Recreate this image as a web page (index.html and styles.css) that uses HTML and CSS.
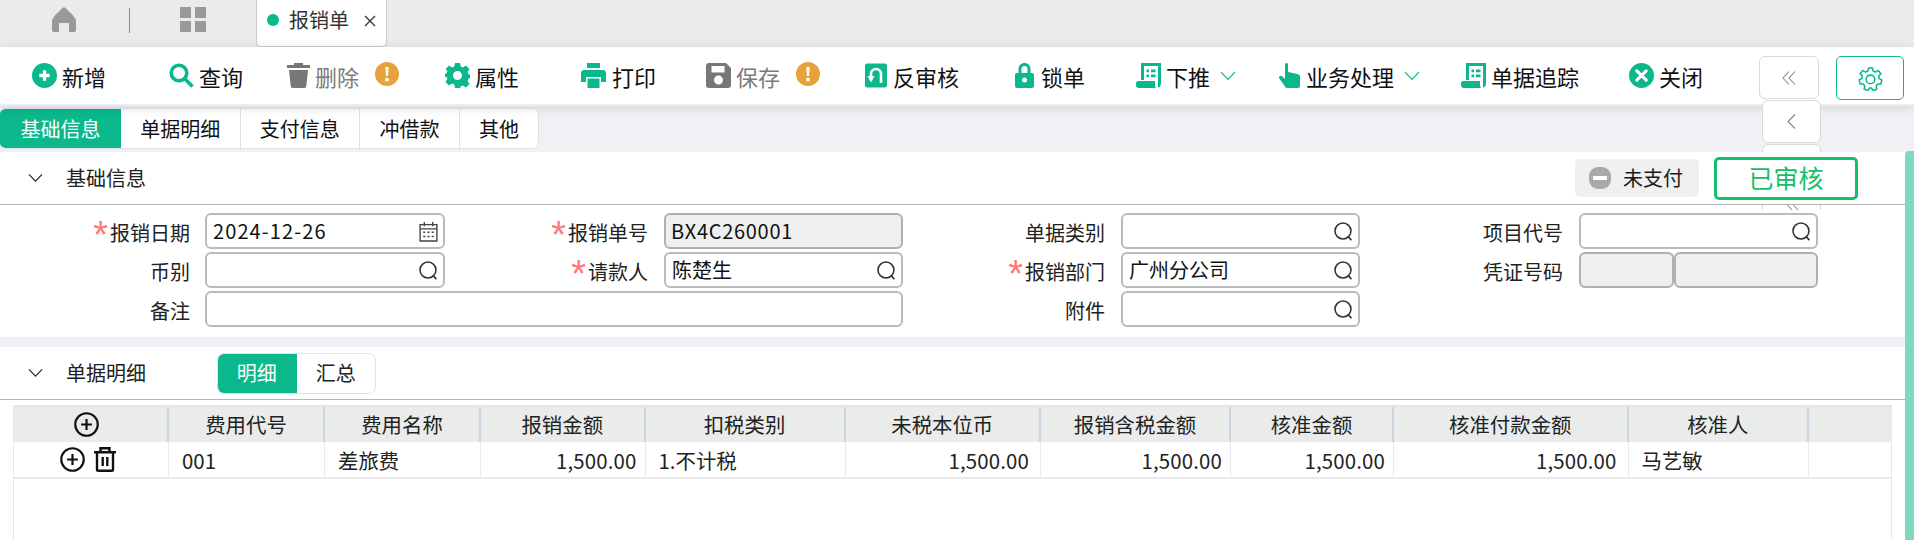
FILE: index.html
```html
<!DOCTYPE html>
<html lang="zh-CN">
<head>
<meta charset="utf-8">
<title>报销单</title>
<link rel="stylesheet" href="styles.css">
</head>
<body>
<svg class="defs" width="0" height="0" aria-hidden="true">
  <defs>
    <symbol id="search" viewBox="0 0 20 20"><circle cx="9.5" cy="9.5" r="7.6" fill="none" stroke="currentColor" stroke-width="1.5"/><path d="M14.5 15l2.6 2.8" fill="none" stroke="currentColor" stroke-width="1.6" stroke-linecap="round"/></symbol>
    <symbol id="chev" viewBox="0 0 16 10"><path d="M1 1.2l7 7.2 7-7.2" fill="none" stroke="currentColor" stroke-width="1.2"/></symbol>
    <symbol id="warn" viewBox="0 0 24 24"><circle cx="12" cy="12" r="12" fill="#e8a23c"/><path d="M10.4 5h3.2l-.6 9h-2zM10.3 16h3.4v3.2h-3.4z" fill="#fff"/></symbol>
    <symbol id="doc" viewBox="0 0 25 25"><path d="M5 0h20v20c0 2.500-1 4.500-3 4.500V3H8v14H5z" fill="currentColor"/><path d="M1.500 18H19v3.500c0 2 .6 3 1 3.500H3c-1.800 0-3-1-3-3v-2c0-.8.700-1.500 1.500-1.500z" fill="currentColor"/><path d="M10.500 6.500h2.500v2.800h-2.500zM15 6.500h4.500v2.800H15zM10.500 11.500h2.500v2.800h-2.500zM15 11.500h4.500v2.800H15z" fill="currentColor"/></symbol>
    <symbol id="plus" viewBox="0 0 24 24"><circle cx="12" cy="12" r="10.8" fill="none" stroke="currentColor" stroke-width="2.100"/><path d="M12 6.800v10.400M6.800 12h10.400" fill="none" stroke="currentColor" stroke-width="2.100"/></symbol>
    <symbol id="dbl-left" viewBox="0 0 14 14"><path d="M7 .5L1 7l6 6.500M13 .5L7 7l6 6.500" fill="none" stroke="currentColor" stroke-width="1.100"/></symbol>
    <symbol id="sgl-left" viewBox="0 0 9 15"><path d="M8 .5L1 7.500l7 7" fill="none" stroke="currentColor" stroke-width="1.200"/></symbol>
    <symbol id="dbl-right" viewBox="0 0 14 14"><path d="M1 .5L7 7l-6 6.500M7 .5L13 7l-6 6.500" fill="none" stroke="currentColor" stroke-width="1.100"/></symbol>
  </defs>
</svg>

<nav class="tabbar">
  <svg class="nav-home" viewBox="0 0 24 25"><path d="M12 0c2 1.500 9 7.500 10 10 1 1.500 2 2.500 2 4v9c0 1-.6 2-2 2h-5v-9H7v9H2c-1.400 0-2-1-2-2v-9c0-1.500 1-2.500 2-4 1-2.500 8-8.500 10-10z" fill="#999"/></svg>
  <span class="nav-sep"></span>
  <svg class="nav-grid" viewBox="0 0 26 25"><path d="M0 0h11v11H0zM15 0h11v11H15zM0 14h11v11H0zM15 14h11v11H15z" fill="#999"/></svg>
  <div class="doc-tab">
    <span class="doc-dot"></span>
    <span class="doc-name">报销单</span>
    <svg class="doc-x" viewBox="0 0 12 12"><path d="M1 1l10 10M11 1L1 11" stroke="#333" stroke-width="1.300"/></svg>
  </div>
</nav>

<header class="toolbar">
  <div class="tool"><svg class="ic" viewBox="0 0 24 24"><circle cx="12" cy="12" r="12" fill="#0ab88c"/><path d="M10.400 7h3.200v3.400H17v3.200h-3.400V17h-3.200v-3.400H7v-3.200h3.400z" fill="#fff"/></svg><span>新增</span></div>
  <div class="tool"><svg class="ic" viewBox="0 0 25 25"><circle cx="10" cy="10" r="7.800" fill="none" stroke="#0ab88c" stroke-width="3.600"/><path d="M15.500 15.500l8 8" stroke="#0ab88c" stroke-width="3.800"/></svg><span>查询</span></div>
  <div class="tool off"><svg class="ic" viewBox="0 0 25 25"><path d="M8 0h9v2h7v3H1V2h7zM3 7h19l-1.700 16c-.1 1-.8 2-2 2H6.700c-1.200 0-1.900-1-2-2z" fill="#777"/></svg><span class="tight">删除</span><svg class="ic-warn"><use href="#warn"/></svg></div>
  <div class="tool"><svg class="ic" viewBox="0 0 25 25"><path fill-rule="evenodd" d="M10 0h5l.7 3.400 2.300 1 3-1.900 3.500 3.500-1.900 3 1 2.300 1.400.7v3l-1.400.7-1 2.300 1.900 3-3.500 3.500-3-1.900-2.300 1L15 25h-5l-.7-3.400-2.300-1-3 1.900L.5 19l1.900-3-1-2.300L0 14v-3l1.400-.7 1-2.300L.5 6 4 2.500l3 1.900 2.300-1zM12.500 8a4.500 4.500 0 1 0 0 9 4.500 4.500 0 0 0 0-9z" fill="#0ab88c"/></svg><span>属性</span></div>
  <div class="tool"><svg class="ic" viewBox="0 0 25 25"><path fill-rule="evenodd" d="M6 0h13v5H6zM3 7h19c1.700 0 3 1.300 3 3v9h-5v-5H5v5H0v-9c0-1.700 1.300-3 3-3zM6.500 15.500h12V25h-12z" fill="#0ab88c"/></svg><span class="wide-gap">打印</span></div>
  <div class="tool off"><svg class="ic" viewBox="0 0 25 25"><path fill-rule="evenodd" d="M3 0h17l5 5v17c0 1.700-1.300 3-3 3H3c-1.700 0-3-1.300-3-3V3c0-1.700 1.300-3 3-3zM5.500 3v6.500h13V3zM12.500 12.500a4.500 4.500 0 1 0 0 9 4.500 4.500 0 0 0 0-9z" fill="#777"/></svg><span>保存</span><svg class="ic-warn"><use href="#warn"/></svg></div>
  <div class="tool"><svg class="ic-w22" viewBox="0 0 22 24"><rect width="22" height="24" rx="2.500" fill="#0ab88c"/><path d="M16 19.500V10.500a5 5 0 0 0-10 0V13" fill="none" stroke="#fff" stroke-width="2.600"/><path d="M2.500 12.500h7L6 19z" fill="#fff"/></svg><span>反审核</span></div>
  <div class="tool"><svg class="ic-w19" viewBox="0 0 19 25"><path fill-rule="evenodd" d="M9.500 0C13 0 15.500 2.600 15.500 6v4H17c1.100 0 2 .9 2 2v11c0 1.100-.9 2-2 2H2c-1.100 0-2-.9-2-2V12c0-1.100.9-2 2-2h1.500V6C3.500 2.600 6 0 9.500 0zm0 3C7.700 3 6.500 4.300 6.500 6v4h6V6c0-1.700-1.200-3-3-3zm0 11.500a2.500 2.500 0 1 0 0 5 2.500 2.500 0 0 0 0-5z" fill="#0ab88c"/></svg><span>锁单</span></div>
  <div class="tool"><svg class="ic doc"><use href="#doc"/></svg><span>下推</span><svg class="ic-chev"><use href="#chev"/></svg></div>
  <div class="tool"><svg class="ic-w21" viewBox="0 0 21 25"><path d="M6 1.500C6 .6 6.700 0 7.500 0S9 .6 9 1.500V9l9.500 2c1.500.3 2.500 1.500 2.500 3v9c0 1.100-.9 2-2 2H8c-.7 0-1.300-.3-1.700-.9L.3 15.500c-.6-.9-.3-2 .6-2.500.7-.4 1.600-.3 2.200.3L6 16z" fill="#0ab88c"/></svg><span>业务处理</span><svg class="ic-chev"><use href="#chev"/></svg></div>
  <div class="tool"><svg class="ic doc"><use href="#doc"/></svg><span>单据追踪</span></div>
  <div class="tool"><svg class="ic" viewBox="0 0 24 24"><circle cx="12" cy="12" r="12" fill="#0ab88c"/><path d="M7.500 7.500l9 9M16.500 7.500l-9 9" stroke="#fff" stroke-width="3" stroke-linecap="round"/></svg><span>关闭</span></div>
</header>

<div class="pager">
  <button class="pg pg-first" type="button" aria-label="首页"><svg class="pg-dbl"><use href="#dbl-left"/></svg></button>
  <button class="pg" type="button" aria-label="上一页"><svg class="pg-sgl"><use href="#sgl-left"/></svg></button>
  <button class="pg" type="button" aria-label="下一页"></button>
  <button class="pg" type="button" aria-label="末页"><svg class="pg-dbl"><use href="#dbl-right"/></svg></button>
</div>
<button class="gear" type="button" aria-label="设置">
  <svg viewBox="0 0 26 26"><path d="M11 2h4l.7 3.200 2.500 1.100 2.900-1.700 2.700 3.400-2.200 2.400.4 2.700 2.800 1.500-1 4.100-3.200.1-1.700 2.100.7 3.200-3.800 1.600L14 22.900h-2l-1.800 2.700-3.800-1.600.7-3.200-1.700-2.100-3.200-.1-1-4.100 2.800-1.500.4-2.700L2.200 8l2.700-3.400 2.900 1.700 2.500-1.100z" fill="none" stroke="#0ab88c" stroke-width="1.600" stroke-linejoin="round"/><circle cx="13" cy="14" r="4.500" fill="none" stroke="#0ab88c" stroke-width="1.600"/></svg>
</button>

<div class="subtabs">
  <span class="subtab on">基础信息</span>
  <span class="subtab">单据明细</span>
  <span class="subtab">支付信息</span>
  <span class="subtab">冲借款</span>
  <span class="subtab">其他</span>
</div>

<main class="content">
  <section class="panel panel-basic">
    <div class="panel-head">
      <svg class="head-chev"><use href="#chev"/></svg>
      <span class="head-title">基础信息</span>
      <div class="chip"><span class="chip-ic"></span><span>未支付</span></div>
      <div class="stamp">已审核</div>
    </div>
    <div class="form">
      <label class="lbl"><i>*</i>报销日期</label>
      <div class="fld date"><span>2024-12-26</span><svg class="fic" viewBox="0 0 18 20"><path d="M1 3.500h16V19H1z M1 7.500h16 M5 1v4 M13 1v4" fill="none" stroke="#444" stroke-width="1.300"/><path d="M4 10h2v1.500H4zM8 10h2v1.500H8zM12 10h2v1.500h-2zM4 14h2v1.500H4zM8 14h2v1.500H8zM12 14h2v1.500h-2z" fill="#444"/></svg></div>
      <label class="lbl"><i>*</i>报销单号</label>
      <div class="fld dis code"><span>BX4C260001</span></div>
      <label class="lbl">单据类别</label>
      <div class="fld"><svg class="fic"><use href="#search"/></svg></div>
      <label class="lbl">项目代号</label>
      <div class="fld"><svg class="fic"><use href="#search"/></svg></div>

      <label class="lbl">币别</label>
      <div class="fld"><svg class="fic"><use href="#search"/></svg></div>
      <label class="lbl"><i>*</i>请款人</label>
      <div class="fld"><span>陈楚生</span><svg class="fic"><use href="#search"/></svg></div>
      <label class="lbl"><i>*</i>报销部门</label>
      <div class="fld"><span>广州分公司</span><svg class="fic"><use href="#search"/></svg></div>
      <label class="lbl">凭证号码</label>
      <div class="pair"><div class="fld dis"></div><div class="fld dis"></div></div>

      <label class="lbl">备注</label>
      <div class="fld wide"></div>
      <label class="lbl">附件</label>
      <div class="fld"><svg class="fic"><use href="#search"/></svg></div>
    </div>
  </section>

  <section class="panel panel-detail">
    <div class="panel-head">
      <svg class="head-chev"><use href="#chev"/></svg>
      <span class="head-title">单据明细</span>
      <div class="toggle"><span class="tg on">明细</span><span class="tg">汇总</span></div>
    </div>
    <div class="grid-wrap">
      <div class="row row-h">
        <div class="c c-act"><svg class="ic-plus"><use href="#plus"/></svg></div>
        <div class="c">费用代号</div><div class="c">费用名称</div><div class="c">报销金额</div><div class="c">扣税类别</div><div class="c">未税本位币</div><div class="c">报销含税金额</div><div class="c">核准金额</div><div class="c">核准付款金额</div><div class="c">核准人</div><div class="c"></div>
      </div>
      <div class="row row-b">
        <div class="c c-act"><svg class="ic-plus"><use href="#plus"/></svg><svg class="ic-trash" viewBox="0 0 24 25"><path d="M1 5.200h22M7.500 5V1.300h9V5M4 5v17.500c0 .8.500 1.300 1.300 1.300h13.400c.8 0 1.300-.5 1.300-1.300V5M9.700 10v9M14.300 10v9" fill="none" stroke="#111" stroke-width="2.400"/></svg></div>
        <div class="c">001</div><div class="c">差旅费</div><div class="c num">1,500.00</div><div class="c">1.不计税</div><div class="c num n11">1,500.00</div><div class="c num">1,500.00</div><div class="c num">1,500.00</div><div class="c num n11">1,500.00</div><div class="c">马艺敏</div><div class="c"></div>
      </div>
    </div>
  </section>
</main>
<div class="thumb"></div>
</body>
</html>
```

FILE: styles.css
```css
* { box-sizing: border-box; }
html, body { margin: 0; padding: 0; height: 540px; overflow: hidden; }
body {
  position: relative;
  background: #f0f1f5;
  color: #1a1a1a;
  font: 20px/1.2 "Noto Sans CJK SC", "Noto Sans", sans-serif;
}
.defs { position: absolute; }

.tabbar {
  height: 47px;
  display: flex;
  align-items: flex-start;
  background: #e9eceb;
}
.nav-home { width: 24px; height: 25px; margin: 7px 0 0 52px; }
.nav-sep { width: 1px; height: 25px; margin: 8px 0 0 53px; background: #8a8a8a; }
.nav-grid { width: 26px; height: 25px; margin: 7px 0 0 50px; }
.doc-tab {
  width: 131px;
  height: 47px;
  margin-left: 50px;
  display: flex;
  align-items: flex-start;
  background: #fff;
  border: 1px solid #c9cbcc;
  border-top: 0;
  border-radius: 0 0 5px 5px;
}
.doc-dot { width: 12px; height: 12px; margin: 14px 0 0 10px; border-radius: 50%; background: #0ab88c; }
.doc-name { margin: 8px 0 0 10px; line-height: 24px; color: #333; }
.doc-x { width: 12px; height: 12px; margin: 15px 0 0 15px; }

.toolbar {
  position: relative;
  z-index: 2;
  height: 59px;
  padding-left: 32px;
  display: grid;
  grid-template-columns: 137px 117px 159px 136px 125px 159px 150px 121px 143px 182px 168px 130px;
  align-items: center;
  background: #fff;
  border-bottom: 2px solid #eeeeef;
  box-shadow: 0 2px 10px rgba(0, 0, 0, .12);
  font-size: 22px;
}
.tool { display: flex; align-items: center; color: #111; height: 28px; }
.tool > span { margin-left: 5px; line-height: 28px; }
.tool > .tight { margin-left: 4px; }
.tool > .wide-gap { margin-left: 6px; }
.tool.off > span { color: #7b7b7b; }
.ic { width: 25px; height: 25px; flex: none; }
.ic-w22 { width: 22px; height: 25px; flex: none; margin-right: 1px; }
.ic-w19 { width: 19px; height: 25px; flex: none; margin-right: 2px; }
.ic-w21 { width: 21px; height: 25px; flex: none; margin-right: 1px; }
.doc { color: #0ab88c; }
.ic-warn { width: 24px; height: 24px; margin: -4px 0 0 16px; flex: none; }
.ic-chev { width: 16px; height: 10px; margin-left: 10px; color: #0ab88c; flex: none; }

.pager {
  position: absolute;
  z-index: 3;
  top: 56px;
  left: 1759px;
  width: 62px;
  display: flex;
  flex-direction: column;
  align-items: flex-end;
  gap: 1px;
}
.pg {
  width: 59px;
  height: 43px;
  padding: 0;
  display: flex;
  align-items: center;
  justify-content: center;
  background: #fff;
  border: 1px solid #d9d9d9;
  border-radius: 6px;
  color: #8a8a8a;
}
.pg-first { width: 60px; margin-right: 2px; }
.pg-dbl { width: 14px; height: 14px; }
.pg-sgl { width: 9px; height: 15px; }
.gear {
  position: absolute;
  z-index: 3;
  top: 56px;
  left: 1836px;
  width: 68px;
  height: 44px;
  padding: 0;
  background: #fff;
  border: 1px solid #0ab88c;
  border-radius: 5px;
  display: flex;
  align-items: center;
  justify-content: center;
}
.gear svg { width: 25px; height: 25px; }

.subtabs {
  width: 539px;
  height: 41px;
  margin-top: 2px;
  display: flex;
  background: #fff;
  border: 1px solid #e0e1ea;
  border-left: 0;
  border-radius: 6px;
  overflow: hidden;
}
.subtab {
  display: flex;
  align-items: center;
  justify-content: center;
  width: 119.500px;
  color: #111;
  border-right: 1px solid #dfe1ea;
}
.subtab:nth-child(4) { width: 100px; }
.subtab:last-child { width: 78px; border-right: 0; }
.subtab.on { width: 121px; margin: -1px 0; background: #0ab88c; color: #fff; border-right: 0; }

.content { margin-top: 3px; width: 1905px; }
.panel { background: #fff; }
.panel-basic { height: 185px; }
.panel-detail { height: 193px; margin-top: 10px; }
.panel-head {
  position: relative;
  z-index: 4;
  height: 53px;
  display: flex;
  align-items: center;
  background: #fff;
  border-bottom: 1px solid #b4b4b4;
}
.head-chev { width: 15px; height: 10px; margin-left: 28px; color: #222; flex: none; }
.head-title { margin-left: 23px; color: #222; }
.chip {
  margin: 0 0 0 auto;
  width: 124px;
  height: 38px;
  display: flex;
  align-items: center;
  background: #f0f0f0;
  border-radius: 5px;
}
.chip-ic {
  position: relative;
  width: 22px;
  height: 22px;
  margin: 0 12px 0 14px;
  border-radius: 9px;
  background: #a9a9a9;
}
.chip-ic::after {
  content: "";
  position: absolute;
  left: 4px;
  right: 4px;
  top: 9px;
  height: 4px;
  background: #fff;
}
.stamp {
  width: 144px;
  height: 43px;
  margin: 0 47px 0 15px;
  border: 3px solid #12c06c;
  border-radius: 5px;
  color: #17bf69;
  font-size: 25px;
  line-height: 35px;
  text-align: center;
}

.form {
  position: relative;
  z-index: 4;
  margin-top: 5px;
  padding-top: 3px;
  display: grid;
  grid-template-columns: 205px 240px 219px 239px 218px 239px 219px 239px;
  grid-auto-rows: 36px;
  row-gap: 3px;
  background: #fff;
}
.lbl {
  padding: 3px 16px 0 0;
  text-align: right;
  line-height: 34px;
  color: #222;
}
.lbl:first-child, .lbl:nth-child(9), .lbl:nth-child(17) { padding-right: 15px; }
.lbl i {
  color: #f77;
  font: 38px/0 "Liberation Sans", sans-serif;
  margin-right: 2px;
  vertical-align: -7px;
}
.fld {
  height: 36px;
  padding: 0 4px 0 6px;
  display: flex;
  align-items: center;
  justify-content: space-between;
  background: #fff;
  border: 2px solid #bbb;
  border-radius: 6px;
  line-height: 30px;
  color: #111;
}
.fld > span { margin-top: -1px; }
.fld.dis { background: #eeefef; border-color: #b0b0b0; }
.date > span { letter-spacing: 1.100px; }
.code > span { letter-spacing: .7px; margin-left: -1px; }
.fic { width: 21px; height: 21px; margin-left: auto; color: #333; flex: none; }
.fld.wide { grid-column: span 3; }
.pair { display: grid; grid-template-columns: 95px 144px; }

.toggle {
  display: flex;
  width: 159px;
  height: 41px;
  margin-left: 71px;
  border: 1px solid #e0e1ea;
  border-radius: 7px;
  overflow: hidden;
}
.tg { width: 79px; display: flex; align-items: center; justify-content: center; color: #222; }
.tg.on { width: 80px; background: #0ab88c; color: #fff; margin: -1px 0 -1px -1px; }

.grid-wrap {
  width: 1879px;
  height: 135px;
  margin: 5px 0 0 13px;
  border: 1px solid #e8e8ec;
  border-top-width: 2px;
  border-top-color: #e3e4ec;
  border-bottom: 0;
}
.row {
  display: grid;
  grid-template-columns: 155px 156px 156px 164.500px 200px 195.500px 190px 163px 234.500px 180.500px 1fr;
  font-size: 20.400px;
}
.row-h { height: 35px; background: #e9eceb; }
.row-h .c { justify-content: center; border-right: 2px solid #cfd2e0; }
.row-b { height: 37px; border-bottom: 2px solid #e9e9ee; }
.row-b .c { padding: 2px 0 0 13px; border-right: 1px solid #e8e8ee; }
.c { display: flex; align-items: center; color: #222; min-width: 0; }
.c:last-child { border-right: 0 !important; }
.row-b .num { justify-content: flex-end; padding-right: 8px; letter-spacing: .15px; }
.row-b .n11 { padding-right: 11px; }
.row-h .c-act { justify-content: center; padding: 0 9px 0 0; }
.row-b .c-act { justify-content: center; padding: 0 5px 0 0; gap: 8px; }
.ic-plus { width: 25px; height: 25px; color: #111; }
.ic-trash { width: 24px; height: 25px; }

.thumb {
  position: absolute;
  z-index: 5;
  top: 151px;
  right: 0;
  width: 9px;
  height: 389px;
  background: #7fd9c1;
  border-radius: 4px 0 0 0;
}
```
